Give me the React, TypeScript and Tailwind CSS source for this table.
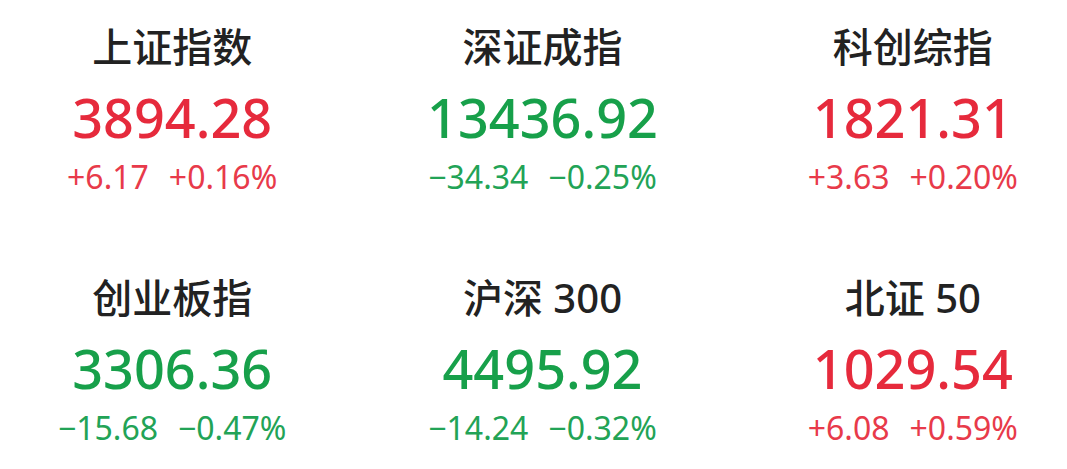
const indices = [
  { name: "上证指数", value: "3894.28", change: "+6.17", pct: "+0.16%", up: true },
  { name: "深证成指", value: "13436.92", change: "−34.34", pct: "−0.25%", up: false },
  { name: "科创综指", value: "1821.31", change: "+3.63", pct: "+0.20%", up: true },
  { name: "创业板指", value: "3306.36", change: "−15.68", pct: "−0.47%", up: false },
  { name: "沪深 300", value: "4495.92", change: "−14.24", pct: "−0.32%", up: false },
  { name: "北证 50", value: "1029.54", change: "+6.08", pct: "+0.59%", up: true },
];

export default function App() {
  return (
    <div
      className="w-[1067px] h-[469px] bg-white overflow-hidden"
      style={{ fontFamily: '"Noto Sans", "Noto Sans CJK SC", sans-serif' }}
    >
      <div className="grid grid-cols-3 gap-x-[70px] gap-y-[77px] pl-[22px] pr-[4px] pt-[23px]">
        {indices.map((item) => (
          <div key={item.name} className="flex flex-col items-center">
            {/* Name */}
            <div className="text-[40px] leading-[48px] font-medium text-[#222222]">
              {item.name}
            </div>

            {/* Value */}
            <div
              className={
                item.up
                  ? "mt-[18px] text-[54px] leading-[56px] font-medium text-[#e62a3c]"
                  : "mt-[18px] text-[54px] leading-[56px] font-medium text-[#17a04a]"
              }
            >
              {item.value}
            </div>

            {/* Change */}
            <div
              className={
                item.up
                  ? "mt-[12px] flex gap-[20px] text-[32px] leading-[40px] text-[#e83a4a]"
                  : "mt-[12px] flex gap-[20px] text-[32px] leading-[40px] text-[#22a356]"
              }
            >
              <span>{item.change}</span>
              <span>{item.pct}</span>
            </div>
          </div>
        ))}
      </div>
    </div>
  );
}
